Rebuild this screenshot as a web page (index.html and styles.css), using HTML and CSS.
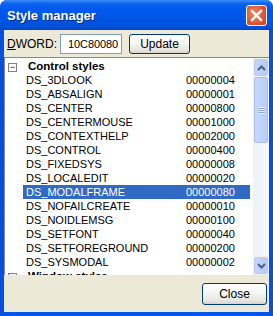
FILE: index.html
```html
<!DOCTYPE html>
<html lang="en">
<head>
    <meta charset="UTF-8">
    <title>Style manager</title>
    <link rel="stylesheet" href="styles.css">
</head>
<body>
    <div class="window">
        <div class="titlebar">
            <span class="title">Style manager</span>
            <div class="close-x">
                <svg width="13" height="13" viewBox="0 0 13 13">
                    <path d="M2 2 L11 11 M11 2 L2 11" stroke="#fff" stroke-width="2.4" stroke-linecap="square"/>
                </svg>
            </div>
        </div>
        <div class="client">
            <div class="toolbar">
                <label class="label"><u>D</u>WORD:</label>
                <div class="edit">10C80080</div>
                <button class="btn update">Update</button>
            </div>
            <div class="listbox">
                <div class="list">
                    <div class="row group"><span class="tree">&minus;</span><span class="name">Control styles</span></div>
                    <div class="row"><span class="name">DS_3DLOOK</span><span class="val">00000004</span></div>
                    <div class="row"><span class="name">DS_ABSALIGN</span><span class="val">00000001</span></div>
                    <div class="row"><span class="name">DS_CENTER</span><span class="val">00000800</span></div>
                    <div class="row"><span class="name">DS_CENTERMOUSE</span><span class="val">00001000</span></div>
                    <div class="row"><span class="name">DS_CONTEXTHELP</span><span class="val">00002000</span></div>
                    <div class="row"><span class="name">DS_CONTROL</span><span class="val">00000400</span></div>
                    <div class="row"><span class="name">DS_FIXEDSYS</span><span class="val">00000008</span></div>
                    <div class="row"><span class="name">DS_LOCALEDIT</span><span class="val">00000020</span></div>
                    <div class="row selected"><span class="name">DS_MODALFRAME</span><span class="val">00000080</span></div>
                    <div class="row"><span class="name">DS_NOFAILCREATE</span><span class="val">00000010</span></div>
                    <div class="row"><span class="name">DS_NOIDLEMSG</span><span class="val">00000100</span></div>
                    <div class="row"><span class="name">DS_SETFONT</span><span class="val">00000040</span></div>
                    <div class="row"><span class="name">DS_SETFOREGROUND</span><span class="val">00000200</span></div>
                    <div class="row"><span class="name">DS_SYSMODAL</span><span class="val">00000002</span></div>
                    <div class="row group"><span class="tree">&minus;</span><span class="name">Window styles</span></div>
                </div>
                <div class="scrollbar">
                    <div class="sb-btn">
                        <svg width="9" height="6" viewBox="0 0 9 6"><path d="M1 5 L4.5 1.5 L8 5" fill="none" stroke="#4d6185" stroke-width="2"/></svg>
                    </div>
                    <div class="sb-track">
                        <div class="sb-thumb"><span class="grip"></span></div>
                    </div>
                    <div class="sb-btn">
                        <svg width="9" height="6" viewBox="0 0 9 6"><path d="M1 1 L4.5 4.5 L8 1" fill="none" stroke="#4d6185" stroke-width="2"/></svg>
                    </div>
                </div>
            </div>
            <div class="footer">
                <button class="btn close">Close</button>
            </div>
        </div>
    </div>
</body>
</html>
```

FILE: styles.css
```css
body {
    margin: 0;
    width: 273px;
    height: 316px;
    overflow: hidden;
    font-family: "Liberation Sans", Arial, sans-serif;
    font-size: 11px;
    color: #000;
}
.window {
    width: 273px;
    height: 316px;
    box-sizing: border-box;
    background: linear-gradient(to right, #0a4fd8, #0055ea 8px, #0055ea 265px, #0a4fd8);
    border-radius: 7px 7px 0 0;
    display: flex;
    flex-direction: column;
    overflow: hidden;
}
.titlebar {
    height: 30px;
    flex: none;
    display: flex;
    align-items: center;
    justify-content: space-between;
    padding: 0 6px 0 7px;
    background: linear-gradient(to bottom, #3a8cf8 0%, #0d63ee 12%, #0058ee 30%, #0054e3 70%, #0050d8 90%, #0046c8 100%);
}
.title {
    color: #fff;
    font-weight: bold;
    font-size: 13px;
    text-shadow: 1px 1px 0 #0a2a8a;
    margin-top: 1px;
}
.close-x {
    width: 19px;
    height: 19px;
    border: 1px solid #fff;
    border-radius: 3px;
    background: radial-gradient(circle at 40% 40%, #f08c6a, #e0542e 60%, #c0401e);
    display: flex;
    align-items: center;
    justify-content: center;
}
.client {
    flex: 1;
    margin: 0 4px 4px 4px;
    background: #ece9d8;
    display: flex;
    flex-direction: column;
}
.toolbar {
    display: flex;
    align-items: center;
    height: 27px;
    padding: 0 0 0 3px;
}
.label {
    width: 53px;
    font-size: 12px;
}
.edit {
    width: 53px;
    height: 18px;
    line-height: 18px;
    padding-left: 7px;
    border: 1px solid #7f9db9;
    background: #fff;
    font-size: 11px;
    letter-spacing: -0.1px;
}
.btn {
    font-family: "Liberation Sans", Arial, sans-serif;
    font-size: 12px;
    color: #000;
    border: 1px solid #003c74;
    border-radius: 3px;
    background: linear-gradient(to bottom, #ffffff, #f4f4f0 50%, #e3e2d9 90%, #d6d0c5);
    padding: 0;
}
.update {
    width: 61px;
    height: 20px;
    margin-left: 7px;
}
.listbox {
    height: 217px;
    display: flex;
    border-top: 1px solid #8c8a80;
    border-left: 1px solid #8c8a80;
    background: #fff;
    overflow: hidden;
}
.list {
    flex: 1;
    padding-top: 1px;
}
.row {
    display: flex;
    height: 14px;
    line-height: 14px;
    margin-left: 18px;
    margin-right: 3px;
    padding-left: 3px;
    font-size: 11px;
}
.row .name {
    width: 160px;
}
.row.group {
    margin-left: 3px;
    padding-left: 0;
    font-weight: bold;
    font-size: 11.5px;
}
.tree {
    width: 7px;
    height: 7px;
    border: 1px solid #808080;
    margin: 4px 11px 0 0;
    font-size: 9px;
    line-height: 6px;
    text-align: center;
    font-weight: normal;
}
.row.selected {
    background: #316ac5;
    color: #fff;
}
.scrollbar {
    width: 16px;
    display: flex;
    flex-direction: column;
    background: #f3f1ec;
}
.sb-btn {
    height: 15px;
    margin: 1px;
    border: 1px solid #b8cbf4;
    border-radius: 2px;
    background: linear-gradient(to right, #c6d6fa, #b5caf6);
    display: flex;
    align-items: center;
    justify-content: center;
}
.sb-track {
    flex: 1;
    background: linear-gradient(to right, #eef1fb, #f7f8fd);
}
.sb-thumb {
    height: 64px;
    margin: 0 1px;
    border: 1px solid #a9bff0;
    border-radius: 2px;
    background: linear-gradient(to right, #c8d8fc, #b9cdf8);
    display: flex;
    align-items: center;
    justify-content: center;
}
.grip {
    width: 7px;
    height: 7px;
    background: repeating-linear-gradient(to bottom, #eef3fe 0 1px, #8ca6e0 1px 2px);
}
.footer {
    flex: 1;
    display: flex;
    justify-content: flex-end;
    align-items: center;
    padding-right: 2px;
}
.close {
    width: 65px;
    height: 22px;
}
```
